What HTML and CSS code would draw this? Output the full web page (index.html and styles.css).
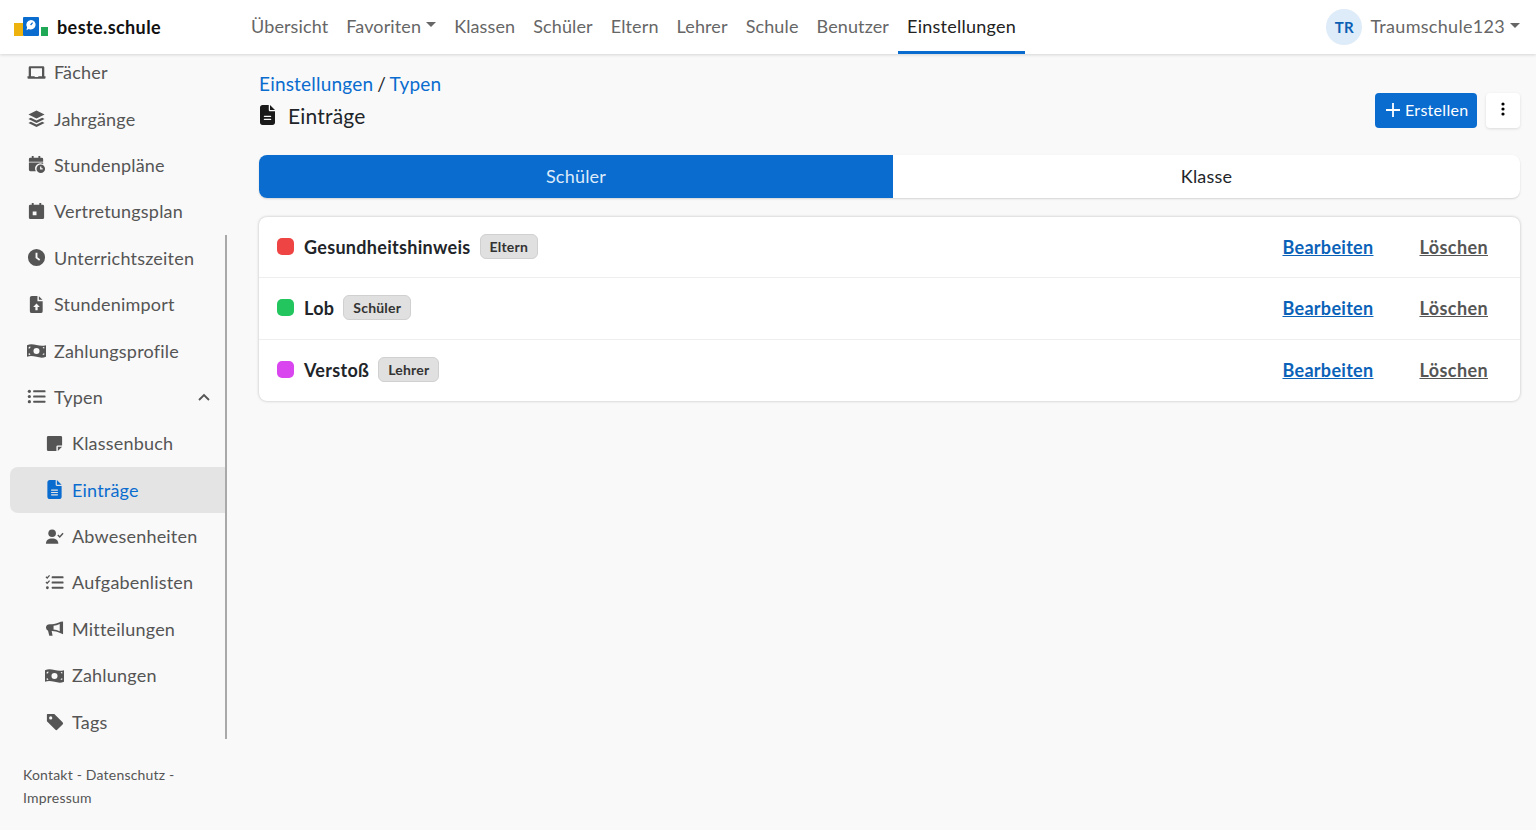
FILE: index.html

```html
<!DOCTYPE html>
<html lang="de">
<head>
<meta charset="UTF-8" />
<meta name="viewport" content="width=device-width, initial-scale=1" />
<title>beste.schule - Einträge</title>
<link rel="stylesheet" href="styles.css">
</head>
<body>
<header class="topbar">
  <a class="brand">
    <svg class="logo" viewBox="0 0 34 19" width="34" height="19">
      <rect x="0" y="6" width="9" height="13" fill="#eeb20f"/>
      <rect x="9" y="0" width="16" height="19" rx="1" fill="#0a6ccf"/>
      <rect x="27" y="10" width="7" height="9" fill="#1fa855"/>
      <path d="M17 3a4.700 4.700 0 1 1-2.200 8.900L12.500 13.200l.6-2.900A4.700 4.700 0 0 1 17 3z" fill="#fff"/>
      <path d="M16.600 8l2-2.300" stroke="#0a6ccf" stroke-width="1.200"/>
    </svg>
    <span>beste.schule</span>
  </a>
  <nav class="mainnav">
    <a>Übersicht</a>
    <a class="caret">Favoriten</a>
    <a>Klassen</a>
    <a>Schüler</a>
    <a>Eltern</a>
    <a>Lehrer</a>
    <a>Schule</a>
    <a>Benutzer</a>
    <a class="active">Einstellungen</a>
  </nav>
  <div class="account">
    <span class="avatar">TR</span>
    <a class="caret">Traumschule123</a>
  </div>
</header>

<div class="layout">
  <aside class="sidebar">
    <ul class="sidenav">
      <li><svg viewBox="0 0 20 20"><path d="M3 3.500h14a1.200 1.200 0 0 1 1.200 1.200V14h1.300v1.500a1 1 0 0 1-1 1h-17a1 1 0 0 1-1-1V14h1.300V4.700A1.200 1.200 0 0 1 3 3.500zM4.200 5.500V14h3.600l.6 .8h3.200l.6-.8h3.600V5.500z"/></svg>Fächer</li>
      <li><svg viewBox="0 0 20 20"><path d="M10 1.500l8.500 4.200L10 9.900 1.500 5.700zM4 9.200l6 3 6-3 2.500 1.300L10 14.700l-8.500-4.200zM4 13.400l6 3 6-3 2.500 1.300L10 18.900l-8.500-4.200z"/></svg>Jahrgänge</li>
      <li><svg viewBox="0 0 20 20"><path d="M5 1h2v2h5V1h2v2h1.500A1.500 1.500 0 0 1 17 4.500V7H2V4.500A1.500 1.500 0 0 1 3.500 3H5zM2 8h15v1.600A5.500 5.500 0 0 0 9.300 17H3.500A1.500 1.500 0 0 1 2 15.500z"/><path fill-rule="evenodd" d="M14.500 10a4.500 4.500 0 1 1 0 9 4.500 4.500 0 0 1 0-9zm-.7 2v3.200h2.700v-1.300h-1.400V12z"/></svg>Stundenpläne</li>
      <li><svg viewBox="0 0 20 20"><path fill-rule="evenodd" d="M5 1h2v2h6V1h2v2h1.500A1.500 1.500 0 0 1 18 4.500v12a1.500 1.500 0 0 1-1.500 1.500h-13A1.500 1.500 0 0 1 2 16.500v-12A1.500 1.500 0 0 1 3.500 3H5zM6 10v4h4v-4z"/></svg>Vertretungsplan</li>
      <li><svg viewBox="0 0 20 20"><path fill-rule="evenodd" d="M10 1a9 9 0 1 1 0 18 9 9 0 0 1 0-18zM9 5v5.600l3.800 2.700 1.100-1.500L11 9.700V5z"/></svg>Unterrichtszeiten</li>
      <li><svg viewBox="0 0 20 20"><path fill-rule="evenodd" d="M5 1h6v5.500h5.500V17a2 2 0 0 1-2 2H5a2 2 0 0 1-2-2V3a2 2 0 0 1 2-2zM12.500 1.200l3.800 3.800h-3.800zM10 9l-3.500 3.700h2.300V16h2.400v-3.300h2.300z"/></svg>Stundenimport</li>
      <li><svg viewBox="0 0 20 20"><path fill-rule="evenodd" d="M0 4.500c3.500-1.600 6.500-1 10-.2s6.500 1.200 10 .2v12c-3.500 1.600-6.500 1-10 .2s-6.500-1.200-10-.2zM10 7.300a3.200 3.200 0 1 0 0 6.400 3.200 3.200 0 0 0 0-6.400zM1.800 6.200v1.900a1.800 1.800 0 0 0 1.800-2.200zM16.500 6.600a1.800 1.800 0 0 0 1.700 1.400V6.300zM1.800 13v1.800l1.800-.3A1.800 1.800 0 0 0 1.800 13zM18.200 12.800a1.800 1.800 0 0 0-1.800 1.800l1.800-.2z"/></svg>Zahlungsprofile</li>
      <li class="open"><svg viewBox="0 0 20 20"><circle cx="2.500" cy="4.500" r="1.700"/><circle cx="2.500" cy="10" r="1.700"/><circle cx="2.500" cy="15.500" r="1.700"/><rect x="6.500" y="3.500" width="13" height="2" rx=".6"/><rect x="6.500" y="9" width="13" height="2" rx=".6"/><rect x="6.500" y="14.500" width="13" height="2" rx=".6"/></svg>Typen
        <svg class="chevron" viewBox="0 0 14 14"><path d="M2 10l5-5 5 5" fill="none" stroke="#555" stroke-width="1.800"/></svg>
      </li>
      <li class="sub"><svg viewBox="0 0 20 20"><path d="M3.500 2h13A1.500 1.500 0 0 1 18 3.500V12h-4.500a1.500 1.500 0 0 0-1.500 1.500V18H3.500A1.500 1.500 0 0 1 2 16.500v-13A1.500 1.500 0 0 1 3.500 2zM13.500 13.500H18L13.500 18z"/></svg>Klassenbuch</li>
      <li class="sub current"><svg viewBox="0 0 384 512"><path d="M64 0C28.700 0 0 28.700 0 64V448c0 35.300 28.700 64 64 64H320c35.300 0 64-28.700 64-64V160H256c-17.700 0-32-14.300-32-32V0H64zM256 0V128H384L256 0zM112 256H272c8.800 0 16 7.200 16 16s-7.200 16-16 16H112c-8.800 0-16-7.200-16-16s7.200-16 16-16zm0 64H272c8.800 0 16 7.200 16 16s-7.200 16-16 16H112c-8.800 0-16-7.200-16-16s7.200-16 16-16zm0 64H272c8.800 0 16 7.200 16 16s-7.200 16-16 16H112c-8.800 0-16-7.200-16-16s7.200-16 16-16z"/></svg>Einträge</li>
      <li class="sub"><svg viewBox="0 0 20 20"><circle cx="7.500" cy="6.500" r="4"/><path d="M1 17.500c0-3.500 2.500-5.500 6.500-5.500s6.500 2 6.500 5.500z"/><path d="M13.500 8.500l2 2 3.500-4" fill="none" stroke="#555" stroke-width="1.500"/></svg>Abwesenheiten</li>
      <li class="sub"><svg viewBox="0 0 20 20"><path d="M1 4l1.300 1.300L4.800 2.500M1 9.500l1.300 1.300 2.500-2.800" fill="none" stroke="#555" stroke-width="1.300"/><circle cx="2.500" cy="15.500" r="1.500"/><rect x="7" y="3.500" width="12.500" height="2" rx=".6"/><rect x="7" y="9" width="12.500" height="2" rx=".6"/><rect x="7" y="14.500" width="12.500" height="2" rx=".6"/></svg>Aufgabenlisten</li>
      <li class="sub"><svg viewBox="0 0 20 20"><path d="M19 2.500V16L16.500 15C13 13.200 10 12.500 7.500 12.500H7l1 5H4.500L3.200 12.400A4 4 0 0 1 1 9a4 4 0 0 1 4-3.500h2.500C10 5.500 13 4.700 16.500 3zM15.500 5.300c-2.300 1-4.500 1.700-6.500 1.900v3.800c2 .2 4.200.9 6.500 1.900z"/></svg>Mitteilungen</li>
      <li class="sub"><svg viewBox="0 0 20 20"><path fill-rule="evenodd" d="M0 4.500c3.500-1.600 6.500-1 10-.2s6.500 1.200 10 .2v12c-3.500 1.600-6.500 1-10 .2s-6.500-1.200-10-.2zM10 7.300a3.200 3.200 0 1 0 0 6.400 3.200 3.200 0 0 0 0-6.400zM1.800 6.200v1.900a1.800 1.800 0 0 0 1.800-2.200zM16.500 6.600a1.800 1.800 0 0 0 1.700 1.400V6.300zM1.800 13v1.800l1.800-.3A1.800 1.800 0 0 0 1.800 13zM18.200 12.800a1.800 1.800 0 0 0-1.800 1.800l1.800-.2z"/></svg>Zahlungen</li>
      <li class="sub"><svg viewBox="0 0 20 20"><path fill-rule="evenodd" d="M2.500 2h7.300L18.500 10.700a1.700 1.700 0 0 1 0 2.400l-5.400 5.400a1.700 1.700 0 0 1-2.400 0L2 9.800V2.500zM6 4.500a1.700 1.700 0 1 0 0 3.400 1.700 1.700 0 0 0 0-3.400z"/></svg>Tags</li>
    </ul>
    <span class="scrollthumb"></span>
    <p class="sidefoot">Kontakt - Datenschutz - Impressum</p>
  </aside>

  <main class="content">
    <div class="pagehead">
      <div>
        <div class="crumbs"><a>Einstellungen</a> / <a>Typen</a></div>
        <h1><svg viewBox="0 0 384 512"><path d="M64 0C28.700 0 0 28.700 0 64V448c0 35.300 28.700 64 64 64H320c35.300 0 64-28.700 64-64V160H256c-17.700 0-32-14.300-32-32V0H64zM256 0V128H384L256 0zM112 272H272c8.800 0 16 7.200 16 16s-7.200 16-16 16H112c-8.800 0-16-7.200-16-16s7.200-16 16-16zm0 80H272c8.800 0 16 7.200 16 16s-7.200 16-16 16H112c-8.800 0-16-7.200-16-16s7.200-16 16-16z"/></svg>Einträge</h1>
      </div>
      <div class="actions">
        <button class="btn-primary"><svg viewBox="0 0 14 14" width="14" height="14"><path d="M7 0v14M0 7h14" stroke="#fff" stroke-width="1.800"/></svg>Erstellen</button>
        <button class="btn-more"><svg viewBox="0 0 4 14" width="4" height="14"><circle cx="2" cy="2" r="1.600"/><circle cx="2" cy="7" r="1.600"/><circle cx="2" cy="12" r="1.600"/></svg></button>
      </div>
    </div>

    <div class="tabs">
      <a class="tab selected">Schüler</a>
      <a class="tab">Klasse</a>
    </div>

    <div class="card">
      <div class="row">
        <span class="dot red"></span><strong>Gesundheitshinweis</strong><span class="badge">Eltern</span>
        <a class="edit">Bearbeiten</a><a class="del">Löschen</a>
      </div>
      <div class="row">
        <span class="dot green"></span><strong>Lob</strong><span class="badge">Schüler</span>
        <a class="edit">Bearbeiten</a><a class="del">Löschen</a>
      </div>
      <div class="row">
        <span class="dot pink"></span><strong>Verstoß</strong><span class="badge">Lehrer</span>
        <a class="edit">Bearbeiten</a><a class="del">Löschen</a>
      </div>
    </div>
  </main>
</div>
</body>
</html>
```

FILE: styles.css

```css
* { box-sizing: border-box; }
html, body { height: 100%; }
body { margin: 0; background: #f9f9f9; color: #212529; font-family: Lato, "Open Sans", sans-serif; font-size: 18px; letter-spacing: .2px; overflow: hidden; }
a { cursor: pointer; }

.topbar { position: relative; z-index: 2; display: flex; align-items: stretch; height: 54px; background: #fff; box-shadow: 0 1px 3px rgba(0,0,0,.15); }
.brand { display: flex; align-items: center; width: 242px; padding-left: 14px; color: #111; font-weight: 700; font-size: 18px; letter-spacing: .4px; }
.logo { margin: -1px 9px 0 0; }
.mainnav { display: flex; letter-spacing: .12px; }
.mainnav a { display: flex; align-items: center; padding: 0 9px; color: #666; border-bottom: 3px solid transparent; }
.mainnav a.active { color: #222; border-bottom-color: #0a6ccf; letter-spacing: .25px; }
.caret { display: flex; align-items: center; }
.caret::after { content: ""; margin-left: 5px; margin-top: -2px; border-top: 5px solid currentColor; border-left: 5px solid transparent; border-right: 5px solid transparent; }
.account { display: flex; align-items: center; margin-left: auto; padding: 0 16px 2px 0; color: #666; letter-spacing: .3px; }
.avatar { display: flex; align-items: center; justify-content: center; width: 36px; height: 36px; margin: 2px 8px 0 0; border-radius: 50%; background: #deebf8; color: #0a5fb5; font-size: 15px; font-weight: 700; }

.layout { display: flex; height: 776px; }
.sidebar { position: relative; display: flex; flex-direction: column; width: 217px; margin-left: 10px; flex: none; color: #555; }
.sidenav { list-style: none; margin: -5px 0 0; padding: 0; }
.sidenav li { position: relative; display: flex; align-items: center; height: 46.4px; padding-left: 17px; border-radius: 8px 0 0 8px; }
.sidenav li > svg:first-child { width: 19px; height: 19px; margin-right: 8px; fill: #555; flex: none; }
.sidenav li.sub { padding-left: 35px; }
.sidenav li.current { background: #e4e4e4; color: #0a6ccf; }
.sidenav li.current > svg:first-child { fill: #0a6ccf; }
.chevron { position: absolute; right: 16px; width: 14px; height: 14px; }
.scrollthumb { position: absolute; top: 181px; right: 0; width: 2px; height: 504px; background: #a9a9a9; }
.sidefoot { width: 180px; margin: 18px 0 0 13px; font-size: 14px; line-height: 23px; color: #555; }

.content { flex: 1; padding: 16px 16px 0 32px; min-width: 0; }
.pagehead { display: flex; justify-content: space-between; height: 85px; }
.crumbs { font-size: 19px; line-height: 27px; word-spacing: -1px; }
.crumbs a { color: #0a6ccf; }
h1 { display: flex; align-items: center; margin: 5px 0 0; font-size: 21px; font-weight: 400; line-height: 28px; }
h1 svg { width: 17px; height: 20px; margin: 0 12px 2px 0; fill: #1a1a1a; }
.actions { display: flex; gap: 9px; margin-top: 23px; }
.actions button { height: 35px; border: none; border-radius: 4px; font-family: inherit; letter-spacing: .3px; cursor: pointer; }
.btn-primary { display: flex; align-items: center; gap: 5px; width: 102px; padding: 0 0 2px 11px; background: #0a6ccf; color: #fff; font-size: 16px; }
.btn-more { width: 34px; background: #fff; box-shadow: 0 1px 3px rgba(0,0,0,.12); }

.tabs { display: flex; height: 43px; border-radius: 8px; background: #fff; box-shadow: 0 1px 2px rgba(0,0,0,.15); overflow: hidden; }
.tab { display: flex; align-items: center; justify-content: center; width: 50%; padding-bottom: 2px; color: #212529; }
.tab.selected { width: 634px; flex: none; background: #0a6ccf; color: #ddeafa; }
.tab:last-child { flex: 1; }

.card { margin-top: 19px; border-radius: 8px; background: #fff; box-shadow: 0 0 3px rgba(0,0,0,.25); }
.row { display: flex; align-items: center; height: 61.3px; padding: 0 32px 1px 18px; border-bottom: 1px solid #eee; }
.row:last-child { border-bottom: none; }
.dot { width: 17px; height: 17px; margin-right: 10px; border-radius: 5px; }
.red { background: #ef4444; }
.green { background: #22c55e; }
.pink { background: #d946ef; }
.row strong { font-weight: 700; letter-spacing: .3px; }
.badge { margin-left: 9px; padding: 3px 9px; border: 1px solid #d0d0d0; border-radius: 6px; background: #e0e0e0; color: #333; font-size: 14px; font-weight: 700; line-height: 17px; }
.edit, .del { font-weight: 700; text-decoration: underline; }
.edit { margin-left: auto; color: #0a62b8; letter-spacing: .3px; }
.del { margin-left: 46px; color: #555; letter-spacing: .4px; }
```
